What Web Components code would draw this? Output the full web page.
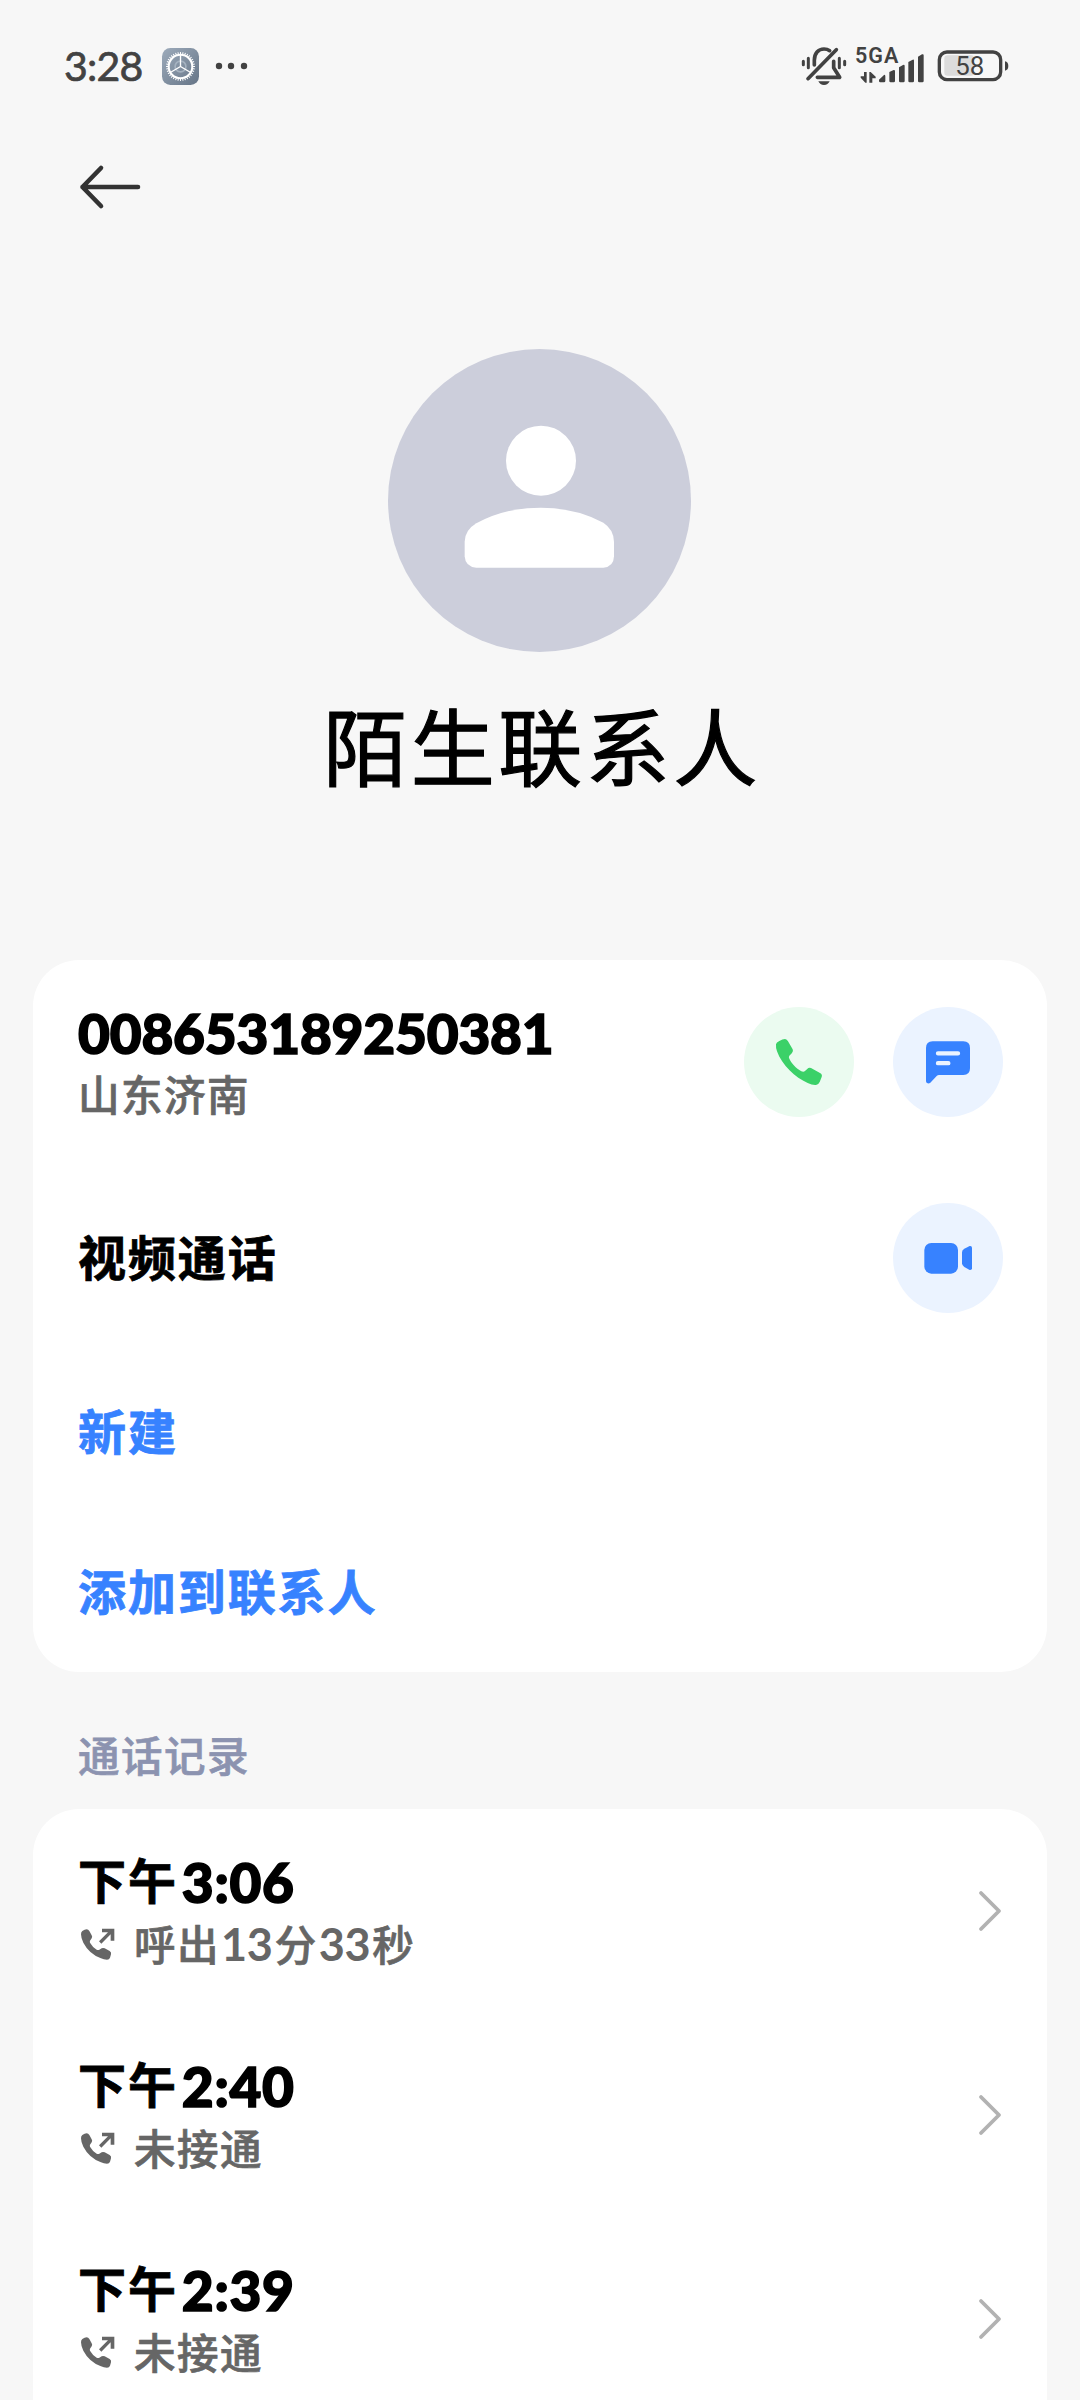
<!DOCTYPE html>
<html lang="zh-CN">
<head>
<meta charset="utf-8">
<title>陌生联系人</title>
<style>
    html, body {
        margin: 0;
        background: #f7f7f7;
    }
    body {
        height: 2400px;
        overflow: hidden;
        font-family: Lato, "Noto Sans CJK SC", sans-serif;
        color: #000;
    }
</style>
</head>
<body>
<contact-page></contact-page>

<script>
// Creates the shadow root of a component from its markup
function render(host, html) {
    const template = document.createElement('template')
    template.innerHTML = html
    host.attachShadow({mode: 'open'})
    host.shadowRoot.appendChild(template.content.cloneNode(true))
}

const icons = {
    back: `<svg width="64" height="46" viewBox="0 0 64 46" fill="none" stroke="#333" stroke-width="4.6" stroke-linecap="round" stroke-linejoin="round">
        <path d="M23 4 4.5 23 23 42M4.5 23H60"/></svg>`,
    call: `<svg width="110" height="110" viewBox="72 81 330 330" fill="#3bd168">
        <path d="M178 183Q188 177 195 177Q201 178 204 184L218 208Q221 215 216 219L208 227Q206 230 207 234C214 250 228 265 244 274Q251 277 255 273L265 264Q269 262 273 264L300 279Q308 284 305 291L299 306Q296 313 288 315Q277 316 263 309C226 293 186 256 171 214Q167 203 168 193Q169 187 178 183Z"/></svg>`,
    message: `<svg width="110" height="110" viewBox="519 81 330 330">
        <path fill="#3782ff" d="M638 184H730Q750 184 750 204V265Q750 285 730 285H657Q653 285 650 288L631 308Q626 312 621 309Q618 307 618 303V204Q618 184 638 184Z"/>
        <path stroke="#ebf3ff" stroke-width="13" stroke-linecap="round" d="M654 220H714M654 249.500H685"/></svg>`,
    video: `<svg width="110" height="110" viewBox="519 669 330 330" fill="#3782ff">
        <rect x="613" y="789" width="101" height="92" rx="21"/>
        <path d="M733 806 749 798Q756 797 756 803V865Q756 871 749 870L733 861Q726 857 726 850V817Q726 810 733 806Z"/></svg>`,
    outgoing: `<svg width="35" height="34" viewBox="180 658 105 102" fill="#666">
        <path d="M187 667Q194 662 200 662Q205 662 208 667L215 680Q218 684 215 689L210 696Q209 699 210 702Q218 716 230 723Q234 725 238 723L245 719Q249 717 254 719L269 727Q275 731 273 737L270 747Q268 753 261 753Q251 753 243 749Q207 735 190 702Q183 688 183 677Q183 670 187 667Z"/>
        <path d="M246 660H283V696H272V677L244 705 237 698 264 671H246Z"/></svg>`,
    chevron: `<svg width="26" height="42" viewBox="0 0 26 42" fill="none" stroke="#b2b2b2" stroke-width="3.800" stroke-linecap="round" stroke-linejoin="round">
        <path d="M4 3 22 21 4 39"/></svg>`
}

class StatusBar extends HTMLElement {
    constructor() {
        super()
        // 36 teeth around the gear
        let teeth = ''
        for (let i = 0; i < 36; i++) {
            teeth += `<path transform="rotate(${i * 10} 55 55)" d="M55 12V20"/>`
        }
        render(this, `
            <style>
                :host {
                    display: flex;
                    align-items: center;
                    justify-content: space-between;
                    box-sizing: border-box;
                    height: 132px;
                    padding: 0 71px 0 64px;
                    color: #424242;
                }
                div {
                    display: flex;
                    align-items: center;
                }
                .time {
                    width: 98px;
                    font-size: 41px;
                    line-height: 50px;
                    font-weight: 400;
                    letter-spacing: -.8px;
                    -webkit-text-stroke: .7px #424242;
                }
                svg {
                    display: block;
                    overflow: visible;
                }
                .dots {
                    margin-left: 16px;
                }
                .signal {
                    position: relative;
                    margin-left: 8px;
                }
                .signal span {
                    position: absolute;
                    left: 0;
                    top: -4px;
                    font: 600 21.5px/24px Roboto, sans-serif;
                    letter-spacing: 1px;
                }
                .battery {
                    margin-left: 13px;
                }
                text {
                    font-family: Roboto, sans-serif;
                    fill: #424242;
                }
            </style>
            <div>
                <span class="time">3:28</span>
                <svg width="37" height="37" viewBox="0 0 110 110">
                    <defs><linearGradient id="g" x1="0" y1="0" x2="1" y2="1">
                        <stop offset="0" stop-color="#9dabbb"/><stop offset="1" stop-color="#667587"/>
                    </linearGradient></defs>
                    <rect width="110" height="110" rx="25" fill="url(#g)"/>
                    <circle cx="55" cy="55" r="16" fill="none" stroke="#a5b2c0" stroke-width="5"/>
                    <g fill="none" stroke="#fff">
                        <circle cx="55" cy="55" r="35" stroke-width="6"/>
                        <path stroke-width="4" d="M55 55V21M55 55 26 72M55 55 84 72"/>
                        <g stroke-width="3">${teeth}</g>
                    </g>
                </svg>
                <svg class="dots" width="33" height="8" viewBox="0 0 33 8" fill="#424242">
                    <circle cx="4" cy="4" r="3.200"/><circle cx="16" cy="4" r="3.200"/><circle cx="29" cy="4" r="3.200"/>
                </svg>
            </div>
            <div>
                <svg width="46" height="40" viewBox="63 48 138 120" fill="none" stroke="#424242" stroke-width="11" stroke-linecap="round">
                    <path d="M103 105V91C103 70 115 57 132 57Q142 57 149 62"/>
                    <path stroke-linejoin="round" d="M161 94V113L179 142H112"/>
                    <path d="M169 59 84 146"/>
                    <path stroke-width="9" d="M70 94V104M85 85V113M178 85V113M194 94V104"/>
                    <path fill="#424242" stroke="none" d="M115 154H149Q144 165 132 165Q120 165 115 154Z"/>
                </svg>
                <div class="signal">
                    <span>5GA</span>
                    <svg width="69" height="36" viewBox="226 48 207 108" fill="#424242">
                        <path d="M253 120H261V152H257L243 137V133H253ZM269 120H273L288 134V139H278V152H269Z"/>
                        <path d="M298 143 313 129Q317 127 317 133V147Q317 151 313 151H302Q298 151 298 147ZM329 120 342 114Q346 113 346 118V147Q346 151 342 151H333Q329 151 329 147ZM358 106 370 99Q375 97 375 102V147Q375 151 371 151H362Q358 151 358 147ZM386 90 399 83Q403 81 403 86V147Q403 151 399 151H390Q386 151 386 147ZM415 74 427 67Q432 65 432 70V147Q432 151 428 151H419Q415 151 415 147Z"/>
                    </svg>
                </div>
                <svg class="battery" width="72" height="34" viewBox="472 56 216 102">
                    <rect x="494" y="75" width="89" height="61" rx="9" fill="#dcdcdc"/>
                    <rect x="479" y="65" width="184" height="83" rx="23" fill="none" stroke="#424242" stroke-width="10"/>
                    <path d="M676 93Q686 95 686 107Q686 119 676 121Z" fill="#424242"/>
                    <text x="527" y="134" font-size="76" textLength="87" lengthAdjust="spacingAndGlyphs">58</text>
                </svg>
            </div>
        `)
    }
}

// Text whose runs of digits are set in their own size
class MixedText extends HTMLElement {
    constructor() {
        super()
        render(this, `
            <style>
                :host {
                    display: block;
                    white-space: nowrap;
                    font-family: "Noto Sans CJK SC", sans-serif;
                    font-weight: 700;
                    font-size: 48px;
                    line-height: 56px;
                    height: 62px;
                    letter-spacing: 1.900px;
                    -webkit-text-stroke: .8px currentColor;
                }
                :host([small]) {
                    font-size: 41.5px;
                    font-weight: 500;
                    line-height: 62px;
                    letter-spacing: 1.500px;
                    color: #666;
                    -webkit-text-stroke-width: .7px;
                }
                b {
                    font-family: Lato, sans-serif;
                    font-weight: 900;
                    font-size: 55px;
                    line-height: 1px;
                    letter-spacing: -.2px;
                    vertical-align: -4.500px;
                    -webkit-text-stroke-width: 1.600px;
                }
                b.clock {
                    margin-left: 4px;
                    letter-spacing: .7px;
                }
                :host([small]) b {
                    margin: 0 2px 0 1px;
                    font-size: 45px;
                    font-weight: 700;
                    letter-spacing: -.3px;
                    vertical-align: 0;
                    -webkit-text-stroke-width: 0;
                }
            </style>
            <span></span>
        `)
        const html = this.getAttribute('text')
            .replace(/[\d:]+/g, run => `<b${run.includes(':') ? ' class="clock"' : ''}>${run}</b>`)
        this.shadowRoot.querySelector('span').innerHTML = html
    }
}

class ContactHeader extends HTMLElement {
    constructor() {
        super()
        render(this, `
            <style>
                :host {
                    display: flex;
                    flex-direction: column;
                    align-items: center;
                    height: 828px;
                }
                nav {
                    display: flex;
                    align-items: center;
                    align-self: stretch;
                    height: 110px;
                    padding-left: 78px;
                }
                .avatar {
                    flex: none;
                    margin-top: 107px;
                    margin-right: 1px;
                }
                h1 {
                    margin: 32px 0 0;
                    font: 400 84px/120px "Noto Sans CJK SC", sans-serif;
                    letter-spacing: 3.500px;
                    text-indent: 4px;
                    -webkit-text-stroke: 1.200px #000;
                }
            </style>
            <nav>${icons.back}</nav>
            <svg class="avatar" width="303" height="303" viewBox="54 57 909 909" fill="#fff">
                <circle cx="508.500" cy="511.500" r="454.500" fill="#cccedb"/>
                <circle cx="513" cy="392" r="105"/>
                <path d="M284 635Q285 600 319 580Q405 533 512 533Q615 533 700 578Q731 598 732 635V679Q731 711 700 713H319Q286 711 284 679Z"/>
            </svg>
            <h1><slot></slot></h1>
        `)
    }
}

class CardBox extends HTMLElement {
    constructor() {
        super()
        render(this, `
            <style>
                :host {
                    display: block;
                    margin: 0 33px;
                    border-radius: 46px;
                    background: #fff;
                }
            </style>
            <slot></slot>
        `)
    }
}

class CardRow extends HTMLElement {
    constructor() {
        super()
        render(this, `
            <style>
                :host {
                    display: flex;
                    align-items: center;
                    justify-content: space-between;
                    box-sizing: border-box;
                    height: 204px;
                    padding: 0 44px 0 45px;
                }
                .actions {
                    display: flex;
                    gap: 39px;
                }
            </style>
            <div><slot></slot></div>
            <div class="actions"><slot name="action"></slot></div>
        `)
    }
}

class RoundButton extends HTMLElement {
    constructor() {
        super()
        render(this, `
            <style>
                :host {
                    display: block;
                    width: 110px;
                    height: 110px;
                    border-radius: 50%;
                    background: #ebf3ff;
                }
                :host([icon="call"]) {
                    background: #ebfbf0;
                }
                svg {
                    display: block;
                }
            </style>
            ${icons[this.getAttribute('icon')]}
        `)
    }
}

class CallRecord extends HTMLElement {
    constructor() {
        super()
        render(this, `
            <style>
                :host {
                    display: flex;
                    align-items: center;
                    justify-content: space-between;
                    box-sizing: border-box;
                    height: 204px;
                    padding: 0 44px 0 45px;
                }
                .time {
                    position: relative;
                    top: 1px;
                }
                .state {
                    display: flex;
                    align-items: center;
                    gap: 19px;
                    padding: 1px 0 0 2px;
                }
                .state svg {
                    margin-top: 5px;
                }
            </style>
            <div>
                <mixed-text class="time" text="${this.getAttribute('time')}"></mixed-text>
                <div class="state">${icons.outgoing}<mixed-text small text="${this.getAttribute('state')}"></mixed-text></div>
            </div>
            ${icons.chevron}
        `)
    }
}

class ContactPage extends HTMLElement {
    constructor() {
        super()
        render(this, `
            <style>
                :host {
                    display: block;
                }
                .middle {
                    height: 188px;
                }
                .link {
                    height: 160px;
                }
                .link mixed-text {
                    color: #3782ff;
                }
                .section {
                    padding: 51px 78px 24px;
                }
                .section mixed-text {
                    color: #8c93b0;
                }
                .records {
                    height: 700px;
                }
            </style>
            <status-bar></status-bar>
            <contact-header>陌生联系人</contact-header>
            <card-box>
                <card-row>
                    <mixed-text text="008653189250381"></mixed-text>
                    <mixed-text small text="山东济南"></mixed-text>
                    <round-button slot="action" icon="call"></round-button>
                    <round-button slot="action" icon="message"></round-button>
                </card-row>
                <card-row class="middle">
                    <mixed-text text="视频通话"></mixed-text>
                    <round-button slot="action" icon="video"></round-button>
                </card-row>
                <card-row class="link"><mixed-text text="新建"></mixed-text></card-row>
                <card-row class="link"><mixed-text text="添加到联系人"></mixed-text></card-row>
            </card-box>
            <div class="section"><mixed-text small text="通话记录"></mixed-text></div>
            <card-box class="records">
                <call-record time="下午3:06" state="呼出13分33秒"></call-record>
                <call-record time="下午2:40" state="未接通"></call-record>
                <call-record time="下午2:39" state="未接通"></call-record>
            </card-box>
        `)
    }
}

window.customElements.define('status-bar', StatusBar)
window.customElements.define('mixed-text', MixedText)
window.customElements.define('contact-header', ContactHeader)
window.customElements.define('card-box', CardBox)
window.customElements.define('card-row', CardRow)
window.customElements.define('round-button', RoundButton)
window.customElements.define('call-record', CallRecord)
window.customElements.define('contact-page', ContactPage)
</script>
</body>
</html>
